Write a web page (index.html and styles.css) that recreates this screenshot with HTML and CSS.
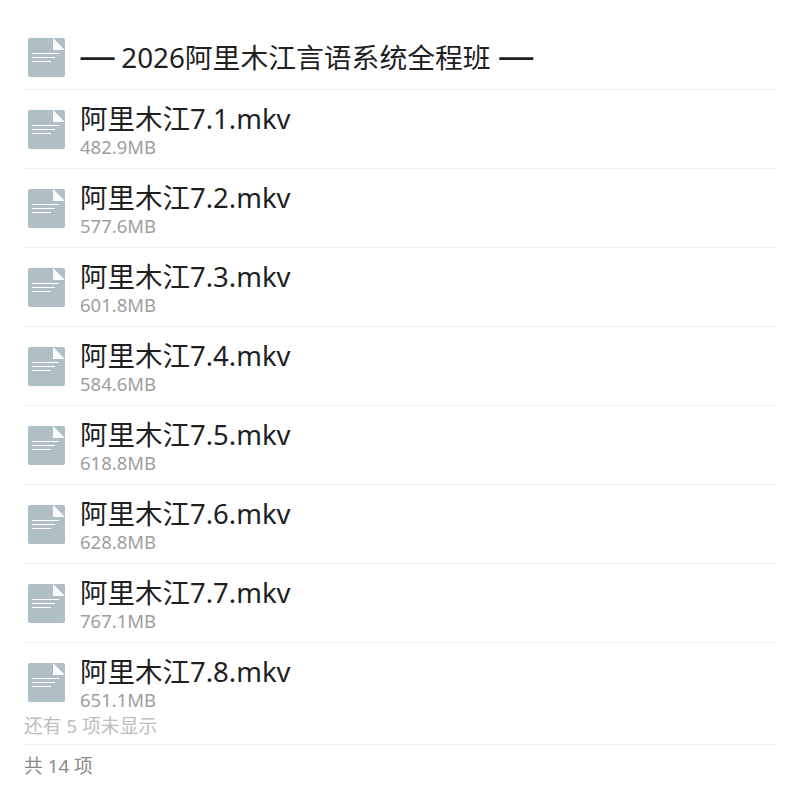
FILE: index.html
```html
<html>
<head>
    <meta charset="UTF-8">
    <meta name="viewport" content="width=device-width, initial-scale=1.0">
    <title>files</title>
    <link rel="stylesheet" href="styles.css">
</head>
<body>

<div class="file-list">
    <div class="file-row folder-row">
        <svg class="file-icon" viewBox="0 0 37 39"><use href="#doc"></use></svg>
        <div class="file-name"><span class="dash">—</span> 2026阿里木江言语系统全程班 <span class="dash">—</span></div>
    </div>
    <div class="file-row">
        <svg class="file-icon" viewBox="0 0 37 39"><use href="#doc"></use></svg>
        <div class="file-info">
            <div class="file-name">阿里木江7.1.mkv</div>
            <div class="file-size">482.9MB</div>
        </div>
    </div>
    <div class="file-row">
        <svg class="file-icon" viewBox="0 0 37 39"><use href="#doc"></use></svg>
        <div class="file-info">
            <div class="file-name">阿里木江7.2.mkv</div>
            <div class="file-size">577.6MB</div>
        </div>
    </div>
    <div class="file-row">
        <svg class="file-icon" viewBox="0 0 37 39"><use href="#doc"></use></svg>
        <div class="file-info">
            <div class="file-name">阿里木江7.3.mkv</div>
            <div class="file-size">601.8MB</div>
        </div>
    </div>
    <div class="file-row">
        <svg class="file-icon" viewBox="0 0 37 39"><use href="#doc"></use></svg>
        <div class="file-info">
            <div class="file-name">阿里木江7.4.mkv</div>
            <div class="file-size">584.6MB</div>
        </div>
    </div>
    <div class="file-row">
        <svg class="file-icon" viewBox="0 0 37 39"><use href="#doc"></use></svg>
        <div class="file-info">
            <div class="file-name">阿里木江7.5.mkv</div>
            <div class="file-size">618.8MB</div>
        </div>
    </div>
    <div class="file-row">
        <svg class="file-icon" viewBox="0 0 37 39"><use href="#doc"></use></svg>
        <div class="file-info">
            <div class="file-name">阿里木江7.6.mkv</div>
            <div class="file-size">628.8MB</div>
        </div>
    </div>
    <div class="file-row">
        <svg class="file-icon" viewBox="0 0 37 39"><use href="#doc"></use></svg>
        <div class="file-info">
            <div class="file-name">阿里木江7.7.mkv</div>
            <div class="file-size">767.1MB</div>
        </div>
    </div>
    <div class="file-row last-row">
        <svg class="file-icon" viewBox="0 0 37 39"><use href="#doc"></use></svg>
        <div class="file-info">
            <div class="file-name">阿里木江7.8.mkv</div>
            <div class="file-size">651.1MB</div>
        </div>
    </div>
    <div class="more-note">还有 5 项未显示</div>
    <div class="total-note">共 14 项</div>
</div>

<svg class="icon-defs" width="0" height="0">
    <defs>
        <g id="doc">
            <rect width="37" height="39" rx="2" fill="#b0bec5"/>
            <path d="M25 0L37 12H25Z" fill="#fff" opacity="0.95"/>
            <rect x="4" y="15" width="27" height="1" fill="#fff"/>
            <rect x="4" y="19" width="23" height="1" fill="#fff"/>
            <rect x="4" y="23" width="19" height="1" fill="#fff"/>
        </g>
    </defs>
</svg>

</body>
</html>
```

FILE: styles.css
```css
body {
    margin: 0;
    background-color: #fff;
    font-family: "Noto Sans", "Noto Sans CJK SC", sans-serif;
    color: #1f1f1f;
}

.icon-defs {
    position: absolute;
}

.file-list {
    padding: 11px 24px 0;
}

.file-row {
    display: flex;
    align-items: flex-start;
    gap: 15px;
    height: 78px;
    padding-left: 4px;
    border-bottom: 1px solid #eeeeee;
}

.file-icon {
    width: 37px;
    height: 39px;
    margin-top: 20px;
    flex-shrink: 0;
}

.folder-row {
    align-items: center;
}

.folder-row .file-icon {
    margin-top: 15px;
}

.folder-row .file-name {
    margin-top: 15px;
    margin-left: -1px;
    font-size: 27.8px;
}

.dash {
    font-size: 37px;
    line-height: 1px;
    margin-right: -2px;
}

.file-info {
    padding-top: 10px;
}

.file-name {
    font-size: 27.5px;
    line-height: 37px;
    white-space: nowrap;
}

.file-size {
    font-size: 18.5px;
    line-height: 20px;
    color: #9e9e9e;
}

.last-row {
    height: 73px;
    border-bottom: none;
}

.more-note {
    font-size: 18.8px;
    line-height: 20px;
    color: #bdbdbd;
    height: 28px;
    border-bottom: 1px solid #eeeeee;
}

.total-note {
    font-size: 18.8px;
    line-height: 42px;
    color: #8a8a8a;
}
```
